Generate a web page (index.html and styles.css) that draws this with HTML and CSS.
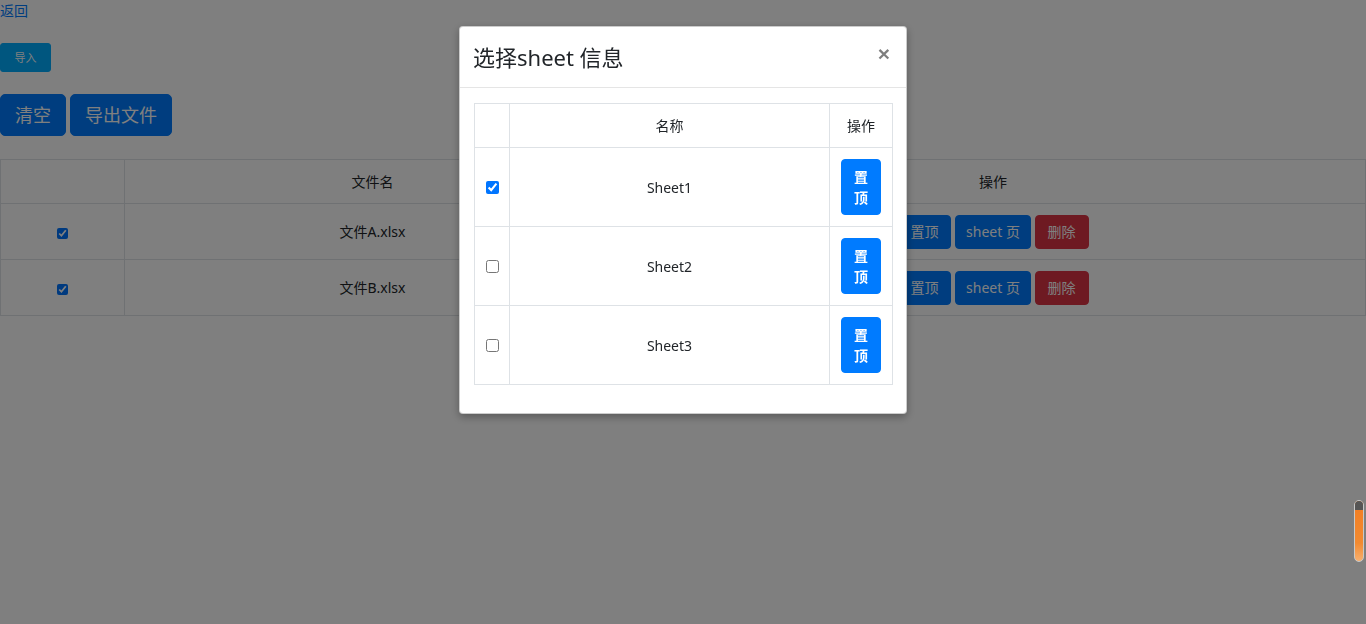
FILE: index.html
```html
<!DOCTYPE html>
<html lang="zh-CN">
<head>
<meta charset="utf-8">
<title>文件</title>
<link rel="stylesheet" href="styles.css">
</head>
<body>
<div class="page">
  <a class="back" href="#">返回</a>
  <div class="import-row"><button class="btn btn-import">导入</button></div>
  <div class="action-row">
    <button class="btn btn-lg btn-primary">清空</button>
    <button class="btn btn-lg btn-primary">导出文件</button>
  </div>
  <table class="files">
    <thead>
      <tr><th class="c-check"></th><th class="c-name">文件名</th><th>操作</th></tr>
    </thead>
    <tbody>
      <tr>
        <td><input type="checkbox" checked></td>
        <td>文件A.xlsx</td>
        <td><button class="btn btn-primary">置顶</button> <button class="btn btn-primary btn-sheet">sheet 页</button> <button class="btn btn-danger">删除</button></td>
      </tr>
      <tr>
        <td><input type="checkbox" checked></td>
        <td>文件B.xlsx</td>
        <td><button class="btn btn-primary">置顶</button> <button class="btn btn-primary btn-sheet">sheet 页</button> <button class="btn btn-danger">删除</button></td>
      </tr>
    </tbody>
  </table>
</div>

<div class="backdrop">
  <div class="modal">
    <div class="modal-header">
      <h4 class="modal-title">选择sheet 信息</h4>
      <span class="close">×</span>
    </div>
    <div class="modal-body">
      <table class="sheets">
        <thead>
          <tr><th class="s-check"></th><th class="s-name">名称</th><th class="s-op">操作</th></tr>
        </thead>
        <tbody>
          <tr><td><input type="checkbox" checked></td><td>Sheet1</td><td><button class="btn btn-primary btn-top">置顶</button></td></tr>
          <tr><td><input type="checkbox"></td><td>Sheet2</td><td><button class="btn btn-primary btn-top">置顶</button></td></tr>
          <tr><td><input type="checkbox"></td><td>Sheet3</td><td><button class="btn btn-primary btn-top">置顶</button></td></tr>
        </tbody>
      </table>
    </div>
  </div>
</div>

<div class="scroll-widget"><div class="scroll-cap"></div></div>
</body>
</html>
```

FILE: styles.css
```css
* { box-sizing: border-box; }
html, body { margin: 0; padding: 0; }
body {
  font-family: "Noto Sans", "Noto Sans CJK SC", sans-serif;
  font-size: 14px;
  line-height: 21px;
  color: #212529;
  background: #fff;
  height: 624px;
  overflow: hidden;
}
.page { display: flex; flex-direction: column; align-items: flex-start; }
.back { color: #007bff; text-decoration: none; font-family: "Noto Sans CJK SC", sans-serif; }
.import-row { margin-top: 22px; }
.action-row { margin-top: 22px; display: flex; gap: 4px; }

.btn {
  display: inline-block;
  font-family: "Noto Sans", "Noto Sans CJK SC", sans-serif;
  font-size: 14px;
  line-height: 20px;
  padding: 6px 12px;
  border: 1px solid transparent;
  border-radius: 4px;
  color: #fff;
  cursor: pointer;
  vertical-align: middle;
}
.btn-primary { background: #007bff; border-color: #007bff; }
.btn-danger { background: #dc3545; border-color: #dc3545; }
.btn-sheet { padding: 6px 10px; }
.btn-import {
  background: #00acff; border-color: #00acff;
  font-size: 11px; line-height: 17px; padding: 5px 13px; width: 51px; height: 29px;
  border-radius: 3px;
}
.btn-lg { font-size: 18px; line-height: 28px; padding: 6px 14px; height: 42px; border-radius: 5px; }

.files {
  margin-top: 23px;
  width: 1366px;
  border-collapse: collapse;
  table-layout: fixed;
}
.files th, .files td {
  border: 1px solid #dee2e6;
  text-align: center;
  vertical-align: middle;
  font-weight: normal;
}
.files th { padding: 11px 12px; height: 43px; }
.files td { padding: 10px 12px; height: 56px; }
.files .c-check { width: 124px; }
.files .c-name { width: 496px; }
.files input[type=checkbox] { width: 11px; height: 11px; margin: 0; vertical-align: middle; }

.backdrop {
  position: fixed;
  inset: 0;
  background: rgba(0, 0, 0, 0.5);
  display: flex;
  justify-content: center;
  align-items: flex-start;
  padding-top: 26px;
}
.modal {
  width: 448px;
  background: #fff;
  border: 1px solid rgba(0, 0, 0, 0.2);
  border-radius: 4px;
  box-shadow: 0 3px 9px rgba(0,0,0,.3);
}
.modal-header {
  display: flex;
  justify-content: space-between;
  align-items: center;
  padding: 15px 14px 15px 13px;
  border-bottom: 1px solid #e5e5e5;
  height: 61px;
}
.modal-title {
  margin: 0;
  font-size: 22px;
  line-height: 30px;
  font-weight: 400;
  color: #212529;
  font-family: "Noto Sans", "Noto Sans CJK SC", sans-serif;
}
.close {
  font-size: 21px;
  font-weight: 700;
  color: #000;
  opacity: 0.5;
  line-height: 20px;
  margin-top: -6px;
  margin-right: 2px;
  font-family: "Liberation Sans", sans-serif;
}
.modal-body { padding: 15px 14px 28px 14px; }
.sheets {
  width: 419px;
  border-collapse: collapse;
  table-layout: fixed;
}
.sheets th, .sheets td {
  border: 1px solid #dee2e6;
  text-align: center;
  vertical-align: middle;
  font-weight: normal;
  padding: 11px 12px;
}
.sheets th { height: 44px; }
.sheets td { height: 79px; }
.sheets .s-check { width: 35px; }
.sheets .s-op { width: 63px; }
.sheets td:first-child { padding: 0 0 2px 0; }
.sheets td:last-child { padding: 0 11px; text-align: left; }
.sheets input[type=checkbox] { width: 13px; height: 13px; margin: 0; vertical-align: middle; }
.btn-top {
  width: 40px;
  padding: 6px 12px;
  line-height: 21px;
  white-space: normal;
  word-break: break-all;
  font-weight: 600;
}

.scroll-widget {
  position: fixed;
  left: 1354px;
  top: 500px;
  width: 10px;
  height: 62px;
  border: 1px solid #c8c8c8;
  border-radius: 5px;
  background: linear-gradient(#f27d22, #f28a30 70%, #f7b070);
  overflow: hidden;
}
.scroll-cap { height: 9px; background: #555; }
```
